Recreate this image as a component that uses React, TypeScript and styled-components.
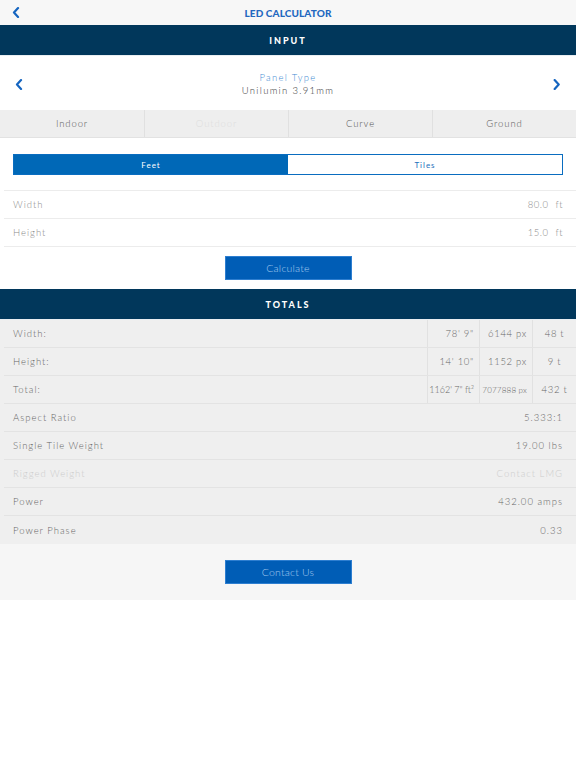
import React, { useState } from "react";
import styled, { createGlobalStyle } from "styled-components";

const GlobalStyle = createGlobalStyle`
  html, body {
    margin: 0;
    padding: 0;
    background: #ffffff;
  }
  body {
    font-family: Lato, "Open Sans", "Liberation Sans", sans-serif;
    font-weight: 300;
    -webkit-font-smoothing: antialiased;
  }
  * {
    box-sizing: border-box;
  }
`;

const Chevron = ({ dir, size = 10 }: { dir: "left" | "right"; size?: number }) => (
  <svg width={size * 0.7} height={size} viewBox="0 0 7 10" fill="none">
    <polyline
      points={dir === "left" ? "5.5,1 1.8,5 5.5,9" : "1.5,1 5.2,5 1.5,9"}
      stroke="#1565c0"
      strokeWidth="2"
      strokeLinecap="round"
      strokeLinejoin="round"
    />
  </svg>
);

const panelTabs = ["Indoor", "Outdoor", "Curve", "Ground"];

const totals = [
  { label: "Width:", feet: "78' 9\"", px: "6144 px", tiles: "48 t" },
  { label: "Height:", feet: "14' 10\"", px: "1152 px", tiles: "9 t" },
  { label: "Total:", feet: "1162' 7\" ft²", px: "7077888 px", tiles: "432 t", small: true },
];

const details = [
  { label: "Aspect Ratio", value: "5.333:1" },
  { label: "Single Tile Weight", value: "19.00 lbs" },
  { label: "Rigged Weight", value: "Contact LMG", muted: true },
  { label: "Power", value: "432.00 amps" },
  { label: "Power Phase", value: "0.33" },
];

export default function App() {
  const [unit, setUnit] = useState<"feet" | "tiles">("feet");
  const [tab, setTab] = useState(0);

  return (
    <Page>
      <GlobalStyle />
      <NavBar>
        <NavBack>
          <Chevron dir="left" size={11} />
        </NavBack>
        <NavTitle>LED CALCULATOR</NavTitle>
      </NavBar>

      <SectionBand>INPUT</SectionBand>

      <PanelPicker>
        <ArrowButton>
          <Chevron dir="left" size={11} />
        </ArrowButton>
        <PanelInfo>
          <PanelCaption>Panel Type</PanelCaption>
          <PanelName>Unilumin 3.91mm</PanelName>
        </PanelInfo>
        <ArrowButton>
          <Chevron dir="right" size={11} />
        </ArrowButton>
      </PanelPicker>

      <TabBar>
        {panelTabs.map((t, i) => (
          <Tab key={t} $disabled={t === "Outdoor"} $active={i === tab} onClick={() => setTab(i)}>
            {t}
          </Tab>
        ))}
      </TabBar>

      <Segments>
        <Segment $selected={unit === "feet"} onClick={() => setUnit("feet")}>
          Feet
        </Segment>
        <Segment $selected={unit === "tiles"} onClick={() => setUnit("tiles")}>
          Tiles
        </Segment>
      </Segments>

      <InputList>
        <InputRow>
          <FieldLabel>Width</FieldLabel>
          <FieldValue>
            80.0<Unit>ft</Unit>
          </FieldValue>
        </InputRow>
        <InputRow>
          <FieldLabel>Height</FieldLabel>
          <FieldValue>
            15.0<Unit>ft</Unit>
          </FieldValue>
        </InputRow>
      </InputList>

      <ButtonArea>
        <PrimaryButton>Calculate</PrimaryButton>
      </ButtonArea>

      <SectionBand>TOTALS</SectionBand>

      <TotalsTable>
        {totals.map((r) => (
          <TotalsRow key={r.label}>
            <TotalsLabel>{r.label}</TotalsLabel>
            <TotalsCell $tight={r.small}>{r.feet}</TotalsCell>
            <TotalsCell $small={r.small}>{r.px}</TotalsCell>
            <TotalsCell $center>{r.tiles}</TotalsCell>
          </TotalsRow>
        ))}
        {details.map((d) => (
          <DetailRow key={d.label} $muted={d.muted}>
            <span>{d.label}</span>
            <span>{d.value}</span>
          </DetailRow>
        ))}
      </TotalsTable>

      <Footer>
        <PrimaryButton>Contact Us</PrimaryButton>
      </Footer>
    </Page>
  );
}

const Page = styled.div`
  width: 576px;
  min-height: 768px;
  background: #ffffff;
  display: flex;
  flex-direction: column;
`;

const NavBar = styled.div`
  height: 25px;
  background: #f7f7f7;
  display: flex;
  align-items: center;
  justify-content: center;
  position: relative;
`;

const NavBack = styled.div`
  position: absolute;
  left: 12px;
  top: 7px;
  display: flex;
`;

const NavTitle = styled.div`
  font-weight: 900;
  font-size: 10px;
  letter-spacing: 0.1px;
  color: #2468bf;
  padding-top: 1px;
`;

const SectionBand = styled.div`
  height: 31px;
  background: #01375b;
  color: #ffffff;
  font-weight: 900;
  font-size: 9px;
  letter-spacing: 2px;
  display: flex;
  align-items: center;
  justify-content: center;
  border-bottom: 1px solid #e9eef2;
`;

const PanelPicker = styled.div`
  height: 54px;
  display: flex;
  align-items: center;
  justify-content: space-between;
  padding: 0 14px 0 14px;
`;

const ArrowButton = styled.div`
  width: 10px;
  display: flex;
  justify-content: center;
  padding-top: 2px;
`;

const PanelInfo = styled.div`
  display: flex;
  flex-direction: column;
  align-items: center;
  gap: 2px;
  padding-top: 1px;
`;

const PanelCaption = styled.div`
  font-size: 9.5px;
  letter-spacing: 1.3px;
  color: #3f8bd2;
`;

const PanelName = styled.div`
  font-size: 9.5px;
  letter-spacing: 1.3px;
  color: #333333;
`;

const TabBar = styled.div`
  display: grid;
  grid-template-columns: repeat(4, 1fr);
  height: 28px;
  background: #eeeeee;
  border-bottom: 1px solid #e2e2e2;
`;

const Tab = styled.div<{ $disabled?: boolean; $active?: boolean }>`
  display: flex;
  align-items: center;
  justify-content: center;
  font-size: 9.5px;
  letter-spacing: 0.9px;
  color: ${({ $disabled }) => ($disabled ? "#dddddd" : "#555555")};
  border-left: 1px solid #e0e0e0;
  cursor: pointer;
  &:first-child {
    border-left: none;
  }
`;

const Segments = styled.div`
  margin: 16px 13px 15px;
  height: 21px;
  display: grid;
  grid-template-columns: 1fr 1fr;
  border: 1px solid #0a6dc0;
`;

const Segment = styled.div<{ $selected?: boolean }>`
  display: flex;
  align-items: center;
  justify-content: center;
  font-size: 8px;
  font-weight: 400;
  letter-spacing: 1px;
  background: ${({ $selected }) => ($selected ? "#0068b7" : "#ffffff")};
  color: ${({ $selected }) => ($selected ? "#ffffff" : "#1e6fbc")};
  cursor: pointer;
`;

const InputList = styled.div`
  margin-left: 4px;
  border-top: 1px solid #ececec;
`;

const InputRow = styled.div`
  height: 28px;
  display: flex;
  align-items: center;
  justify-content: space-between;
  padding: 0 13px 0 9px;
  border-bottom: 1px solid #ececec;
`;

const FieldLabel = styled.span`
  font-size: 9.5px;
  letter-spacing: 1px;
  color: #8a8a8a;
`;

const FieldValue = styled.span`
  font-size: 9.5px;
  letter-spacing: 0.5px;
  color: #8a8a8a;
`;

const Unit = styled.span`
  margin-left: 7px;
`;

const ButtonArea = styled.div`
  display: flex;
  justify-content: center;
  padding: 9px 0 9px;
`;

const PrimaryButton = styled.button`
  width: 127px;
  height: 24px;
  border: 1px solid #2d7ed0;
  background: #005db6;
  color: #a6caee;
  font-family: Lato, "Liberation Sans", sans-serif;
  font-size: 10.5px;
  font-weight: 300;
  letter-spacing: 0.2px;
  cursor: pointer;
`;

const TotalsTable = styled.div`
  background: #efefef;
`;

const TotalsRow = styled.div`
  display: grid;
  grid-template-columns: 1fr 52px 53px 43px;
  height: 28px;
  margin-left: 4px;
  border-bottom: 1px solid #e3e3e3;
`;

const TotalsLabel = styled.div`
  display: flex;
  align-items: center;
  padding-left: 9px;
  font-size: 9.5px;
  letter-spacing: 1px;
  color: #666666;
  border-right: 1px solid #e1e1e1;
`;

const TotalsCell = styled.div<{ $small?: boolean; $center?: boolean; $tight?: boolean }>`
  display: flex;
  align-items: center;
  justify-content: ${({ $center }) => ($center ? "center" : "flex-end")};
  padding-right: ${({ $center }) => ($center ? "0" : "5px")};
  white-space: nowrap;
  font-size: ${({ $small, $tight }) => ($small ? "8px" : $tight ? "9px" : "9.5px")};
  letter-spacing: ${({ $small, $tight }) => ($small ? "0.2px" : $tight ? "0px" : "0.7px")};
  color: #666666;
  border-right: 1px solid #e1e1e1;
  &:last-child {
    border-right: none;
  }
`;

const DetailRow = styled.div<{ $muted?: boolean }>`
  height: 28px;
  margin-left: 4px;
  display: flex;
  align-items: center;
  justify-content: space-between;
  padding: 0 13px 0 9px;
  font-size: 9.5px;
  letter-spacing: 1px;
  color: ${({ $muted }) => ($muted ? "#cccccc" : "#666666")};
  border-bottom: 1px solid #e3e3e3;
  &:last-child {
    border-bottom: none;
  }
`;

const Footer = styled.div`
  background: #f6f6f6;
  display: flex;
  justify-content: center;
  padding: 16px 0 16px;
`;
